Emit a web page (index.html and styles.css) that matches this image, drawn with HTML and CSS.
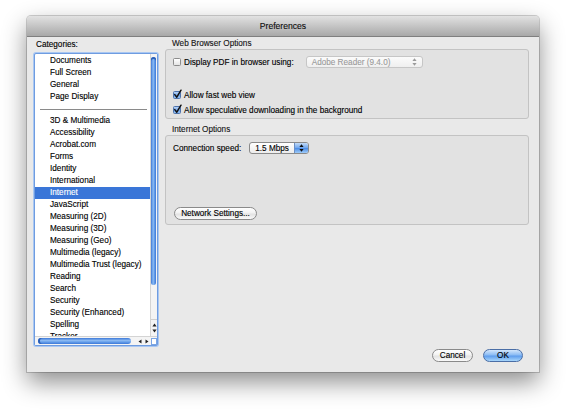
FILE: index.html
```html
<!DOCTYPE html>
<html>
<head>
<meta charset="utf-8">
<link rel="stylesheet" href="styles.css">
</head>
<body>
<div class="stage">
  <div class="window">
    <div class="titlebar">Preferences</div>
    <div class="main">
      <div class="leftcol">
        <div class="cat">Categories:</div>
        <div class="listbox">
          <div class="listbody">
            <ul class="items">
              <li>Documents</li>
              <li>Full Screen</li>
              <li>General</li>
              <li>Page Display</li>
              <li class="sep"><span></span></li>
              <li>3D &amp; Multimedia</li>
              <li>Accessibility</li>
              <li>Acrobat.com</li>
              <li>Forms</li>
              <li>Identity</li>
              <li>International</li>
              <li class="sel">Internet</li>
              <li>JavaScript</li>
              <li>Measuring (2D)</li>
              <li>Measuring (3D)</li>
              <li>Measuring (Geo)</li>
              <li>Multimedia (legacy)</li>
              <li>Multimedia Trust (legacy)</li>
              <li>Reading</li>
              <li>Search</li>
              <li>Security</li>
              <li>Security (Enhanced)</li>
              <li>Spelling</li>
              <li class="last">Tracker</li>
            </ul>
            <div class="vscroll">
              <div class="vtrack"><div class="vthumb"></div></div>
              <div class="varrows">
                <svg width="5" height="4" viewBox="0 0 5 4"><path d="M2.5 0.5 L4.6 3.5 L0.4 3.5 Z" fill="#222"/></svg>
                <svg width="5" height="4" viewBox="0 0 5 4"><path d="M0.4 0.5 L4.6 0.5 L2.5 3.5 Z" fill="#222"/></svg>
              </div>
            </div>
          </div>
          <div class="hscroll">
            <div class="htrack"><div class="hthumb"></div></div>
            <div class="harrows">
              <svg width="4" height="5" viewBox="0 0 4 5"><path d="M0.5 2.5 L3.5 0.4 L3.5 4.6 Z" fill="#222"/></svg>
              <svg width="4" height="5" viewBox="0 0 4 5"><path d="M0.5 0.4 L3.5 2.5 L0.5 4.6 Z" fill="#222"/></svg>
            </div>
            <div class="corner"></div>
          </div>
        </div>
      </div>
      <div class="rightcol">
        <div class="glabel">Web Browser Options</div>
        <div class="group g1">
          <div class="row r1">
            <span class="cb"></span>
            <span class="cbtext">Display PDF in browser using:</span>
            <div class="popup disabled">
              <span class="ptext">Adobe Reader (9.4.0)</span>
              <svg class="parr" width="5" height="8" viewBox="0 0 5 8"><path d="M2.5 0.3 L4.6 3 L0.4 3 Z M0.4 5 L4.6 5 L2.5 7.7 Z" fill="#9a9a9a"/></svg>
            </div>
          </div>
          <div class="row r2">
            <span class="cb on"><svg class="check" width="9" height="10" viewBox="0 0 9 10"><path d="M1.8 5.6 L3.8 8.2 L8 1.2" fill="none" stroke="#111" stroke-width="1.5" stroke-linecap="round" stroke-linejoin="round"/></svg></span>
            <span class="cbtext">Allow fast web view</span>
          </div>
          <div class="row r3">
            <span class="cb on"><svg class="check" width="9" height="10" viewBox="0 0 9 10"><path d="M1.8 5.6 L3.8 8.2 L8 1.2" fill="none" stroke="#111" stroke-width="1.5" stroke-linecap="round" stroke-linejoin="round"/></svg></span>
            <span class="cbtext">Allow speculative downloading in the background</span>
          </div>
        </div>
        <div class="glabel g2l">Internet Options</div>
        <div class="group g2">
          <div class="row">
            <span class="lbl">Connection speed:</span>
            <div class="popup active">
              <span class="ptext">1.5 Mbps</span>
              <span class="pbtn"><svg width="5" height="8" viewBox="0 0 5 8"><path d="M2.5 0.3 L4.6 3 L0.4 3 Z M0.4 5 L4.6 5 L2.5 7.7 Z" fill="#111"/></svg></span>
            </div>
          </div>
          <button class="btn net">Network Settings...</button>
        </div>
      </div>
    </div>
    <div class="footer">
      <button class="btn cancel">Cancel</button>
      <button class="btn ok">OK</button>
    </div>
  </div>
</div>
</body>
</html>
```

FILE: styles.css
```css
html, body {
  margin: 0;
  padding: 0;
  background: #ffffff;
}
body {
  width: 566px;
  height: 409px;
  overflow: hidden;
  font-family: "Liberation Sans", Arial, sans-serif;
  font-size: 8.2px;
  color: #000;
  -webkit-text-stroke: 0.12px #000;
}
.stage {
  padding: 16px 0 0 27px;
}
.window {
  width: 512px;
  height: 356px;
  display: flex;
  flex-direction: column;
  background: #e9e9e9;
  border-radius: 4px 4px 0 0;
  box-shadow: 0 10px 24px rgba(0,0,0,0.45), 0 0 0 1px rgba(0,0,0,0.18);
}
.titlebar {
  flex: none;
  height: 21px;
  box-sizing: border-box;
  border-bottom: 1px solid #7f7f7f;
  border-radius: 4px 4px 0 0;
  background: linear-gradient(#e2e2e2, #c2c2c2 55%, #a8a8a8);
  display: flex;
  align-items: center;
  justify-content: center;
  font-size: 8.6px;
  color: #111;
  padding-bottom: 1px;
}
.main {
  flex: 1;
  display: flex;
  gap: 7px;
  padding: 0 10px 0 7px;
  min-height: 0;
}
.leftcol {
  width: 124px;
  display: flex;
  flex-direction: column;
}
.cat {
  padding: 2px 0 0 2px;
  line-height: 12px;
  height: 12px;
  margin-bottom: 2px;
}
.listbox {
  flex: 1;
  display: flex;
  flex-direction: column;
  background: #fff;
  border: 1px solid #6f9ce0;
  border-radius: 2px;
  box-shadow: 0 0 0 1px #a9c7f2;
  min-height: 0;
}
.listbody {
  flex: 1;
  display: flex;
  min-height: 0;
  overflow: hidden;
}
.items {
  list-style: none;
  margin: 0;
  padding: 1px 0 0 0;
  flex: 1;
  overflow: hidden;
}
.items li {
  height: 12px;
  line-height: 12px;
  padding-left: 15px;
  white-space: nowrap;
}
.items li.last {
  height: 6px;
  overflow: visible;
}
.items li.sel {
  background: #3a76d8;
  color: #fff;
  -webkit-text-stroke: 0.12px #fff;
}
.items li.sep {
  display: flex;
  align-items: center;
  padding: 0 3px 0 5px;
}
.items li.sep span {
  flex: 1;
  height: 1px;
  background: #8a8a8a;
}
.vscroll {
  width: 6px;
  display: flex;
  flex-direction: column;
  border-left: 1px solid #d4d4d4;
  background: #f4f4f4;
}
.vtrack {
  flex: 1;
  padding-top: 3px;
}
.vthumb {
  height: 228px;
  width: 5px;
  border-radius: 3px;
  background: linear-gradient(to right, #3c78d8, #8fbdf3 45%, #6ea5ec 60%, #3c78d8);
  box-shadow: inset 0 2px 0 #2b5fb8;
}
.varrows {
  height: 16px;
  display: flex;
  flex-direction: column;
  align-items: center;
  justify-content: center;
  gap: 2px;
  border-top: 1px solid #d0d0d0;
}
.varrows svg { display: block; }
.hscroll {
  height: 8px;
  flex: none;
  display: flex;
  align-items: center;
  border-top: 1px solid #d4d4d4;
  background: #f4f4f4;
}
.htrack {
  flex: 1;
  padding-left: 3px;
  display: flex;
  align-items: center;
}
.hthumb {
  width: 93px;
  height: 6px;
  border-radius: 3px;
  background: linear-gradient(#3c78d8, #8fbdf3 45%, #6ea5ec 60%, #3c78d8);
  box-shadow: inset 2px 0 0 #2b5fb8;
}
.harrows {
  width: 16px;
  display: flex;
  align-items: center;
  justify-content: center;
  gap: 3px;
}
.harrows svg { display: block; }
.corner {
  width: 6px;
  height: 7px;
  background: #fff;
  border: 1px solid #7aa5e4;
  box-sizing: border-box;
}
.rightcol {
  flex: 1;
  display: flex;
  flex-direction: column;
}
.glabel {
  padding: 1px 0 0 7px;
  height: 11px;
  line-height: 11px;
  color: #222;
}
.g2l {
  margin-top: 5px;
  padding-top: 0;
}
.group {
  box-sizing: border-box;
  border: 1px solid #c3c3c3;
  border-radius: 3px;
  background: #e2e2e2;
  display: flex;
  flex-direction: column;
  padding: 6px 7px 0 7px;
}
.g1 { height: 70px; }
.g2 { height: 90px; padding-bottom: 4px; }
.row {
  height: 12px;
  display: flex;
  align-items: center;
}
.r2 { margin-top: 21px; }
.r3 { margin-top: 3px; }
.cb {
  position: relative;
  width: 8px;
  height: 8px;
  box-sizing: border-box;
  border: 1px solid #8c8c8c;
  border-radius: 1.5px;
  background: linear-gradient(#ffffff, #e4e4e4);
  margin-right: 3px;
  flex: none;
}
.cb.on {
  border-color: #4d73ad;
  background: linear-gradient(#b9d5f7, #6fa2e8 55%, #8fc0f5);
}
.check {
  position: absolute;
  left: -1px;
  top: -3px;
}
.cbtext {
  white-space: nowrap;
}
.popup {
  box-sizing: border-box;
  height: 12px;
  border-radius: 3px;
  display: flex;
  align-items: center;
  position: relative;
}
.popup.disabled {
  width: 117px;
  margin-left: 12px;
  border: 1px solid #c6c6c6;
  background: linear-gradient(#fbfbfb, #efefef);
  color: #9a9a9a;
  -webkit-text-stroke: 0.1px #9a9a9a;
  padding-left: 5px;
}
.popup.disabled .parr {
  margin-left: auto;
  margin-right: 5px;
}
.lbl { white-space: nowrap; }
.popup.active {
  width: 60px;
  margin-left: 8px;
  border: 1px solid #8a8a8a;
  background: linear-gradient(#ffffff, #ececec);
  padding-left: 5px;
  overflow: hidden;
}
.pbtn {
  margin-left: auto;
  width: 13px;
  align-self: stretch;
  display: flex;
  align-items: center;
  justify-content: center;
  background: linear-gradient(#c2dbf8, #6fa6ee 50%, #4f8fe6 55%, #9fcbf8);
  border-left: 1px solid #6b8fc4;
}
.pbtn svg { display: block; }
.btn {
  font-family: "Liberation Sans", Arial, sans-serif;
  font-size: 8.2px;
  color: #000;
  -webkit-text-stroke: 0.12px #000;
  height: 13px;
  box-sizing: border-box;
  padding: 0;
  border: 1px solid #8a8a8a;
  border-radius: 7px;
  background: linear-gradient(#ffffff, #f2f2f2 45%, #e2e2e2 55%, #fafafa);
  line-height: 11px;
  text-align: center;
}
.net {
  margin-top: auto;
  margin-left: 1px;
  width: 83px;
  align-self: flex-start;
}
.footer {
  flex: none;
  display: flex;
  justify-content: flex-end;
  gap: 10px;
  padding: 3px 16px 10px 0;
}
.cancel { width: 41px; }
.ok {
  width: 40px;
  border-color: #4a6ea6;
  background: linear-gradient(#d3e6fb, #8bbcf4 45%, #5f9ded 55%, #a8d6fb);
}
```
